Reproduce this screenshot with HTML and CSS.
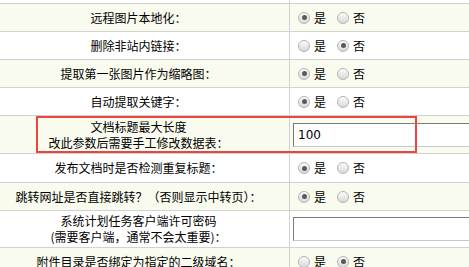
FILE: index.html
```html
<!DOCTYPE html>
<html lang="zh-CN">
<head>
<meta charset="utf-8">
<title>系统设置</title>
<link rel="stylesheet" href="styles.css">
</head>
<body>
<div class="page">
  <div class="form">
    <div class="cell label spacer"></div><div class="cell value spacer"></div>

    <div class="cell label alt">远程图片本地化：</div>
    <div class="cell value alt">
      <label class="opt"><input type="radio" name="r1" checked><span>是</span></label>
      <label class="opt"><input type="radio" name="r1"><span>否</span></label>
    </div>

    <div class="cell label">删除非站内链接：</div>
    <div class="cell value">
      <label class="opt"><input type="radio" name="r2"><span>是</span></label>
      <label class="opt"><input type="radio" name="r2" checked><span>否</span></label>
    </div>

    <div class="cell label alt">提取第一张图片作为缩略图：</div>
    <div class="cell value alt">
      <label class="opt"><input type="radio" name="r3" checked><span>是</span></label>
      <label class="opt"><input type="radio" name="r3"><span>否</span></label>
    </div>

    <div class="cell label">自动提取关键字：</div>
    <div class="cell value">
      <label class="opt"><input type="radio" name="r4" checked><span>是</span></label>
      <label class="opt"><input type="radio" name="r4"><span>否</span></label>
    </div>

    <div class="cell label alt tall">文档标题最大长度<br>改此参数后需要手工修改数据表：</div>
    <div class="cell value alt tall field"><input class="text" type="text" value="100"></div>

    <div class="cell label r29">发布文档时是否检测重复标题：</div>
    <div class="cell value r29">
      <label class="opt"><input type="radio" name="r6" checked><span>是</span></label>
      <label class="opt"><input type="radio" name="r6"><span>否</span></label>
    </div>

    <div class="cell label alt">跳转网址是否直接跳转？（否则显示中转页）：</div>
    <div class="cell value alt">
      <label class="opt"><input type="radio" name="r7" checked><span>是</span></label>
      <label class="opt"><input type="radio" name="r7"><span>否</span></label>
    </div>

    <div class="cell label tall2">系统计划任务客户端许可密码<br>(需要客户端，通常不会太重要)：</div>
    <div class="cell value tall2 field"><input class="text" type="text" value=""></div>

    <div class="cell label alt">附件目录是否绑定为指定的二级域名：</div>
    <div class="cell value alt">
      <label class="opt"><input type="radio" name="r9"><span>是</span></label>
      <label class="opt"><input type="radio" name="r9" checked><span>否</span></label>
    </div>
  </div>
  <div class="highlight"></div>
</div>
</body>
</html>
```

FILE: styles.css
```css
html, body {
  margin: 0;
  padding: 0;
  background: #ffffff;
}

body {
  font-family: "Noto Sans CJK SC", "Noto Sans", sans-serif;
  font-size: 12px;
  color: #000;
  width: 469px;
  height: 267px;
  overflow: hidden;
}

.page {
  position: relative;
}

.form {
  display: grid;
  grid-template-columns: 290px 200px;
}

.cell {
  box-sizing: border-box;
  height: 28px;
  border-bottom: 1px solid #d2d2d2;
  display: flex;
  align-items: center;
  background: #ffffff;
}

.cell.alt {
  background: #f9fbef;
}

.cell.spacer {
  height: 4px;
}

.cell.tall {
  height: 38px;
}

.cell.tall2 {
  height: 37px;
}

.cell.r29 {
  height: 29px;
}

.label {
  border-right: 1px solid #d2d2d2;
  justify-content: center;
  text-align: center;
  padding-right: 12px;
  line-height: 16px;
  white-space: nowrap;
}

.value {
  padding-left: 8px;
}

.value.field {
  padding-left: 3px;
}

.opt {
  display: flex;
  align-items: center;
  margin-right: 11px;
  line-height: 16px;
}

.opt input {
  -webkit-appearance: none;
  appearance: none;
  box-sizing: border-box;
  width: 12px;
  height: 12px;
  margin: 0 4px 0 0;
  border-radius: 50%;
  border: 1px solid #b4b4b4;
  background: linear-gradient(#fbfbfb, #d9d9d9);
  position: relative;
}

.opt input:checked::after {
  content: "";
  position: absolute;
  left: 2.5px;
  top: 2.5px;
  width: 5px;
  height: 5px;
  border-radius: 50%;
  background: #5a5a5a;
}

.text {
  box-sizing: border-box;
  width: 200px;
  height: 24px;
  margin: 0;
  padding: 0 4px;
  border: 1px solid #c8c8c8;
  border-top-color: #7a7a7a;
  border-left-color: #7a7a7a;
  background: #ffffff;
  font-family: "DejaVu Sans", "Liberation Sans", sans-serif;
  font-size: 12px;
  color: #000;
  outline: none;
}

.highlight {
  position: absolute;
  left: 36px;
  top: 116px;
  width: 381px;
  height: 37px;
  box-sizing: border-box;
  border: 2px solid #e8463e;
  pointer-events: none;
}
```
